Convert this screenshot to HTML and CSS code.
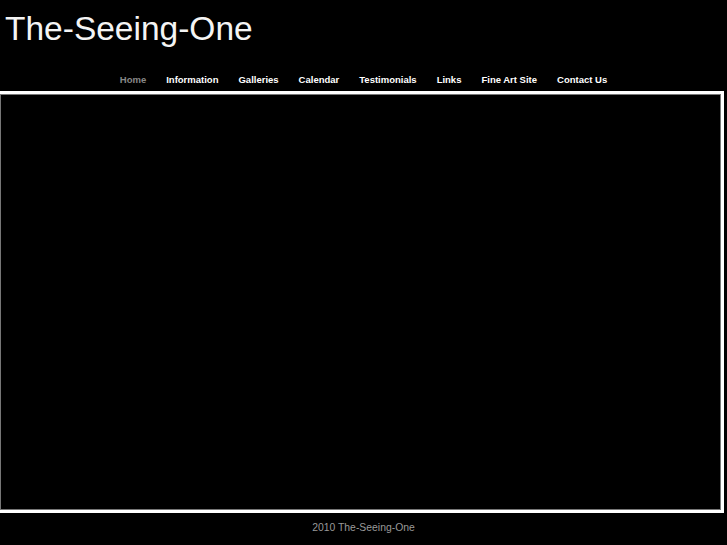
FILE: index.html
```html
<!DOCTYPE html>
<html>
<head>
<meta charset="utf-8">
<title>The-Seeing-One</title>
<link rel="stylesheet" href="styles.css">
</head>
<body>
<div class="header">
  <h1 class="site-title">The-Seeing-One</h1>
</div>
<ul class="nav">
  <li class="nav-item current">Home</li>
  <li class="nav-item">Information</li>
  <li class="nav-item">Galleries</li>
  <li class="nav-item">Calendar</li>
  <li class="nav-item">Testimonials</li>
  <li class="nav-item">Links</li>
  <li class="nav-item">Fine Art Site</li>
  <li class="nav-item">Contact Us</li>
</ul>
<div class="frame">
  <div class="frame-inner"></div>
</div>
<div class="footer">2010 The-Seeing-One</div>
</body>
</html>
```
FILE: styles.css
```css
html, body {
  margin: 0;
  padding: 0;
  background: #000;
  font-family: "Liberation Sans", Arial, sans-serif;
  color: #fff;
}
.header {
  padding: 10px 0 0 5px;
  height: 74px;
  box-sizing: border-box;
}
.site-title {
  margin: 0;
  font-size: 33.5px;
  font-weight: normal;
  line-height: 38px;
  color: #f4f4f4;
}
.nav {
  list-style: none;
  margin: 0;
  padding: 0;
  display: flex;
  justify-content: center;
  height: 12px;
}
.nav-item {
  font-size: 9.5px;
  font-weight: bold;
  line-height: 12px;
  padding: 0 10px;
  color: #fff;
}
.nav-item.current {
  color: #888;
}
.frame {
  margin: 5px 0 0 -3px;
  width: 727px;
  height: 422px;
  box-sizing: border-box;
  border: 3px solid #fff;
}
.frame-inner {
  height: 100%;
  box-sizing: border-box;
  border: 1px solid #777;
  background: #000;
}
.footer {
  text-align: center;
  font-size: 10.4px;
  color: #999;
  line-height: 12px;
  padding-top: 9px;
}
```
